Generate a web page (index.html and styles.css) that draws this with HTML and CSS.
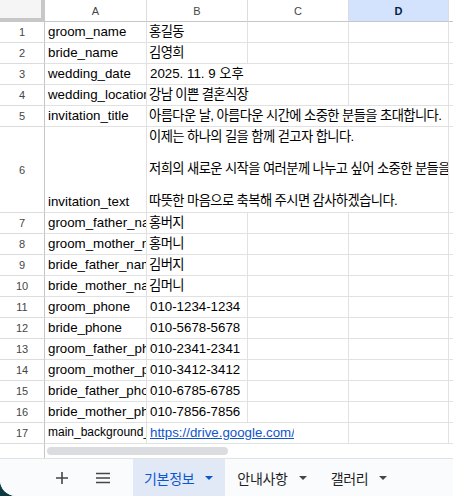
FILE: index.html
```html
<!DOCTYPE html>
<html lang="ko">
<head>
    <meta charset="UTF-8">
    <title>청첩장 데이터</title>
    <link rel="stylesheet" href="styles.css">
</head>
<body>
    <div class="app">
        <div class="sheet">
            <!-- column headers -->
            <div class="corner"></div>
            <div class="col-head">A</div>
            <div class="col-head">B</div>
            <div class="col-head">C</div>
            <div class="col-head selected">D</div>
            <div class="col-head"></div>

            <div class="row-head">1</div>
            <div class="cell">groom_name</div>
            <div class="cell ko">홍길동</div>
            <div class="cell"></div><div class="cell"></div><div class="cell"></div>

            <div class="row-head">2</div>
            <div class="cell">bride_name</div>
            <div class="cell ko">김영희</div>
            <div class="cell"></div><div class="cell"></div><div class="cell"></div>

            <div class="row-head">3</div>
            <div class="cell">wedding_date</div>
            <div class="cell span2">2025. 11. 9 오후</div>
            <div class="cell"></div><div class="cell"></div>

            <div class="row-head">4</div>
            <div class="cell">wedding_location</div>
            <div class="cell span2 ko">강남 이쁜 결혼식장</div>
            <div class="cell"></div><div class="cell"></div>

            <div class="row-head">5</div>
            <div class="cell">invitation_title</div>
            <div class="cell span3 ko">아름다운 날, 아름다운 시간에 소중한 분들을 초대합니다.</div>
            <div class="cell"></div>

            <div class="row-head">6</div>
            <div class="cell">invitation_text</div>
            <div class="cell span3 multi ko">이제는 하나의 길을 함께 걷고자 합니다.

저희의 새로운 시작을 여러분께 나누고 싶어 소중한 분들을 모십니다.

따뜻한 마음으로 축복해 주시면 감사하겠습니다.</div>
            <div class="cell"></div>

            <div class="row-head">7</div>
            <div class="cell">groom_father_name</div>
            <div class="cell ko">홍버지</div>
            <div class="cell"></div><div class="cell"></div><div class="cell"></div>

            <div class="row-head">8</div>
            <div class="cell">groom_mother_name</div>
            <div class="cell ko">홍머니</div>
            <div class="cell"></div><div class="cell"></div><div class="cell"></div>

            <div class="row-head">9</div>
            <div class="cell">bride_father_name</div>
            <div class="cell ko">김버지</div>
            <div class="cell"></div><div class="cell"></div><div class="cell"></div>

            <div class="row-head">10</div>
            <div class="cell">bride_mother_name</div>
            <div class="cell ko">김머니</div>
            <div class="cell"></div><div class="cell"></div><div class="cell"></div>

            <div class="row-head">11</div>
            <div class="cell">groom_phone</div>
            <div class="cell">010-1234-1234</div>
            <div class="cell"></div><div class="cell"></div><div class="cell"></div>

            <div class="row-head">12</div>
            <div class="cell">bride_phone</div>
            <div class="cell">010-5678-5678</div>
            <div class="cell"></div><div class="cell"></div><div class="cell"></div>

            <div class="row-head">13</div>
            <div class="cell">groom_father_phone</div>
            <div class="cell">010-2341-2341</div>
            <div class="cell"></div><div class="cell"></div><div class="cell"></div>

            <div class="row-head">14</div>
            <div class="cell">groom_mother_phone</div>
            <div class="cell">010-3412-3412</div>
            <div class="cell"></div><div class="cell"></div><div class="cell"></div>

            <div class="row-head">15</div>
            <div class="cell">bride_father_phone</div>
            <div class="cell">010-6785-6785</div>
            <div class="cell"></div><div class="cell"></div><div class="cell"></div>

            <div class="row-head">16</div>
            <div class="cell">bride_mother_phone</div>
            <div class="cell">010-7856-7856</div>
            <div class="cell"></div><div class="cell"></div><div class="cell"></div>

            <div class="row-head">17</div>
            <div class="cell small">main_background_image</div>
            <div class="cell span2"><a class="link" href="#">https://drive.google.com/file/d/1aBcDeFg/view</a></div>
            <div class="cell"></div><div class="cell"></div>

            <!-- horizontal scrollbar -->
            <div class="row-head scroll-head"></div>
            <div class="scroll-track"><div class="scroll-thumb"></div></div>
        </div>

        <div class="tabbar">
            <span class="tool">
                <svg width="14" height="14" viewBox="0 0 14 14"><path d="M7 1v12M1 7h12" stroke="#444746" stroke-width="1.6"/></svg>
            </span>
            <span class="tool">
                <svg width="16" height="14" viewBox="0 0 16 14"><path d="M1 2.5h14M1 7h14M1 11.5h14" stroke="#444746" stroke-width="1.6"/></svg>
            </span>
            <div class="tab active">기본정보 <span class="caret"></span></div>
            <div class="tab">안내사항 <span class="caret"></span></div>
            <div class="tab">갤러리 <span class="caret"></span></div>
        </div>
    </div>
</body>
</html>
```

FILE: styles.css
```css
html {
    background-color: #0d3b42;
}
body {
    margin: 0;
    font-family: "Liberation Sans", "Noto Sans CJK KR", sans-serif;
    color: #000;
}
.app {
    width: 453px;
    height: 496px;
    background-color: #fff;
    border-bottom-left-radius: 16px;
    overflow: hidden;
    display: flex;
    flex-direction: column;
}
.sheet {
    display: grid;
    grid-template-columns: 45px 102px 101px 101px 100px 1fr;
    grid-template-rows: 22px repeat(5, 21px) 86px repeat(11, 21px) 14px;
}
.corner {
    background-color: #f5f5f5;
    border-right: 4px solid #c7c7c7;
    border-bottom: 4px solid #c7c7c7;
}
.col-head {
    display: flex;
    align-items: center;
    justify-content: center;
    font-size: 11px;
    color: #444746;
    border-right: 1px solid #dadce0;
    border-bottom: 1px solid #c4c7c5;
}
.col-head.selected {
    background-color: #d3e3fd;
    color: #041e49;
    font-weight: bold;
}
.row-head {
    display: flex;
    align-items: center;
    justify-content: center;
    font-size: 11px;
    color: #444746;
    border-right: 1px solid #c4c7c5;
    border-bottom: 1px solid #dadce0;
}
.cell {
    display: flex;
    align-items: flex-end;
    padding: 0 3px 2px;
    font-size: 13.3px;
    line-height: 17px;
    white-space: nowrap;
    overflow: hidden;
    border-right: 1px solid #e1e1e1;
    border-bottom: 1px solid #e1e1e1;
}
.cell.ko {
    letter-spacing: -0.6px;
    padding-left: 2px;
}
.cell.span2 {
    grid-column: span 2;
}
.cell.span3 {
    grid-column: span 3;
}
.cell.multi {
    white-space: pre;
    line-height: 16px;
    padding-bottom: 3px;
}
.cell.small {
    font-size: 12px;
}
.link {
    display: inline-block;
    width: 144px;
    overflow: hidden;
    color: #1155cc;
    text-decoration: underline;
}
.scroll-head {
    border-bottom: none;
}
.scroll-track {
    grid-column: span 5;
    padding: 3px 0 0 2px;
}
.scroll-thumb {
    width: 181px;
    height: 8px;
    border-radius: 4px;
    background-color: #dadce0;
}
.tabbar {
    flex: 1;
    display: flex;
    align-items: stretch;
    background-color: #f9fbfd;
    border-top: 1px solid #e1e3e1;
    padding-left: 54px;
}
.tool {
    display: flex;
    align-items: center;
    justify-content: center;
    width: 16px;
    margin-right: 25px;
}
.tab {
    display: flex;
    align-items: center;
    gap: 11px;
    padding: 0 12px;
    font-size: 14px;
    letter-spacing: -0.3px;
    color: #1f1f1f;
}
.tab.active {
    background-color: #e1e9f7;
    color: #0b57d0;
    margin-left: -3px;
    padding-left: 11px;
}
.caret {
    width: 0;
    height: 0;
    border-left: 4px solid transparent;
    border-right: 4px solid transparent;
    border-top: 4px solid #444746;
}
.tab.active .caret {
    border-top-color: #0b57d0;
}
```
